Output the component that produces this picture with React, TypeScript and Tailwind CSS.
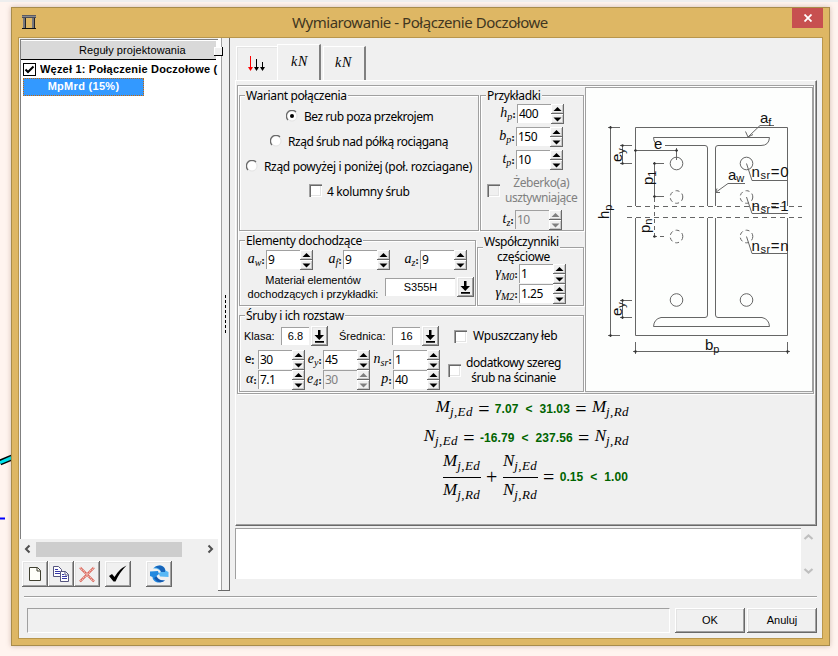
import React from "react";

const ui = "font-['Noto_Sans','Open_Sans',sans-serif] text-[12px] tracking-[-0.36px] leading-[14px] whitespace-nowrap";
const arial = "font-['Liberation_Sans',Arial,sans-serif] whitespace-nowrap";
const math = "font-['Liberation_Serif','Times_New_Roman',serif] italic whitespace-nowrap";
const raised =
  "bg-[#f0f0f0] shadow-[inset_-1px_-1px_0_#696969,inset_1px_1px_0_#fff,inset_-2px_-2px_0_#a0a0a0,inset_2px_2px_0_#e3e3e3]";

function Group({ title, className, titleClass, children }: { title: string; className: string; titleClass?: string; children: React.ReactNode }) {
  return (
    <div className={`relative shrink-0 border border-[#a0a0a0] shadow-[inset_1px_1px_0_#fff,1px_1px_0_#fff] ${className}`}>
      <span className={`absolute bg-[#f0f0f0] px-px ${ui} ${titleClass ?? "left-[5px] -top-[7px]"}`}>{title}</span>
      {children}
    </div>
  );
}

function Spin({ base, sub, value, labelClass, disabled, upright }: { base: string; sub?: string; value: string; labelClass: string; disabled?: boolean; upright?: boolean }) {
  const arrow = disabled ? "#808080" : "#000";
  return (
    <div className="flex h-[20px] shrink-0">
      <span className={`flex justify-end items-center pr-px leading-[16px] ${upright ? ui : `text-[14px] ${math}`} ${labelClass}`}>
        <span className="relative -top-px">{base}</span>
        {sub && <span className="relative top-[3px] text-[10px]">{sub}</span>}
        <span className="not-italic font-bold text-[11px]">:</span>
      </span>
      <div
        className={`w-[34px] h-[19px] pl-px pt-[2px] border-l border-t border-[#a0a0a0] ${ui} tracking-[-0.5px]! ${disabled ? "bg-[#f0f0f0] text-[#808080]" : "bg-white text-black"}`}
      >
        {value}
      </div>
      <div className="flex flex-col w-[13px]">
        {["M2.500 7h8L6.500 3z", "M2.500 3.500h8L6.500 7.500z"].map((d) => (
          <div key={d} className="w-[13px] h-[10px] bg-[#f0f0f0] shadow-[inset_-1px_-1px_0_#696969,inset_1px_1px_0_#fff,inset_-2px_-2px_0_#c8c8c8]">
            <svg width="13" height="10" className="block">
              <path d={d} fill={arrow} />
            </svg>
          </div>
        ))}
      </div>
    </div>
  );
}

function Check({ disabled }: { disabled?: boolean }) {
  return (
    <div
      className={`w-[13px] h-[13px] shrink-0 shadow-[inset_1px_1px_0_#a0a0a0,inset_2px_2px_0_#696969,inset_-1px_-1px_0_#fff,inset_-2px_-2px_0_#e3e3e3] ${disabled ? "bg-[#f0f0f0]" : "bg-white"}`}
    />
  );
}

function Radio({ on }: { on?: boolean }) {
  return (
    <svg width="12" height="12" viewBox="0 0 12 12" className="shrink-0">
      <circle cx="6" cy="6" r="5" fill="#fff" stroke="#e3e3e3" />
      <path d="M2 10A5.300 5.300 0 0 1 10 2" fill="none" stroke="#696969" strokeWidth="1.300" />
      {on && <circle cx="6" cy="6" r="2" fill="#000" />}
    </svg>
  );
}

function Combo({ value, className }: { value: string; className: string }) {
  return (
    <div className="flex items-center gap-[2px]">
      <div className={`h-[18px] flex items-center justify-center bg-white border-l border-t border-[#a0a0a0] text-[11px] ${arial} ${className}`}>{value}</div>
      <div className={`w-[17px] h-[20px] ${raised}`}>
        <svg width="17" height="20" className="block">
          <path d="M7 4h2.500v5H13L8.250 14 3.500 9H7zM4 15h9v1.800H4z" fill="#000" />
        </svg>
      </div>
    </div>
  );
}

function Sym({ base, sub }: { base: string; sub: string }) {
  return (
    <span className={`relative -top-[2px] inline-flex items-baseline text-[17px] leading-[20px] ${math}`}>
      {base}
      <span className="relative top-[4px] text-[13px] tracking-[0.4px]">{sub}</span>
    </span>
  );
}

const Op = ({ children }: { children: string }) => (
  <span className="font-['Liberation_Serif',serif] text-[20px] leading-[20px] w-[12px] text-center">{children}</span>
);
const Num = ({ children }: { children: string }) => (
  <span className={`text-[#006400] font-bold text-[12px] tracking-[0.1px] whitespace-pre ${arial}`}>{children}</span>
);

function Frac({ base, className }: { base: string; className: string }) {
  return (
    <div className={`flex flex-col items-center ${className}`}>
      <div className="h-[24px] flex items-start"><Sym base={base} sub="j,Ed" /></div>
      <div className="w-full h-px bg-black" />
      <div className="h-[24px] pt-[4px] flex items-start"><Sym base={base} sub="j,Rd" /></div>
    </div>
  );
}

function Diagram() {
  return (
    <svg width="226" height="303" viewBox="586 88 226 303" className="block" fill="none" stroke="#666" strokeWidth="1">
      <path d="M635.500 206V127.500H787.500V206M635.500 218V335.500H787.500V218" />
      <path d="M627 206.500H802M627 217.500H802" strokeDasharray="5 4" />
      <path d="M707.500 206V148Q707.500 145.500 705 145.500H665M656 144Q653.500 141 653.500 137.500H769.500Q769 145.500 761 145.500H718Q715.500 145.500 715.500 148V206" />
      <path d="M707.500 218V315Q707.500 317.500 705 317.500H661Q654 319 653.500 326.500H769.500Q769 319 762 317.500H718Q715.500 317.500 715.500 315V218" />
      {[676.5, 746.5].map((x) => (
        <g key={x}>
          <circle cx={x} cy="163.500" r="6.300" />
          <circle cx={x} cy="300" r="6.300" />
          <circle cx={x} cy="197" r="6.300" strokeDasharray="4 3" />
          <circle cx={x} cy="236.500" r="6.300" strokeDasharray="4 3" />
        </g>
      ))}
      <path d="M610.500 126V337M608 127.500H620M608 335.500H620M622.500 145V164M620 145.500H632M620 163.500H632M634 150.500H678M676.500 148V160M654.500 162V198M653 163.500H664M653 196.500H664M622.500 299V319M620 300.500H632M620 317.500H632M633 351.500H790M635.500 342V354M787.500 342V354" />
      <path d="M654.500 198V237M653 236.500H664" strokeDasharray="4 3" />
      <path d="M774 125.500H760L748 137M745.500 131.500L748 137L753 134.500M745 183.500H728L715.500 192.500M717 188.500L715.500 192.500H720M746.500 163.500L752 180.500H788M746.500 197L752 213.500H788M746.500 236.500L752 253.500H788" />
      <g fill="#333" stroke="none">
        {[[610.5, 127.5], [610.5, 335.5], [622.5, 145.5], [622.5, 163.5], [635.5, 150.5], [676.5, 150.5], [654.5, 163.5], [654.5, 196.5], [654.5, 236.5], [622.5, 300.5], [622.5, 317.5], [635.5, 351.5], [787.5, 351.5]].map(([x, y]) => (
          <circle key={`${x}-${y}`} cx={x} cy={y} r="1.200" />
        ))}
      </g>
      <g fill="#111" stroke="none" fontFamily="Liberation Sans" fontSize="15">
        <text x="654" y="149">e</text>
        <text x="760" y="123">a<tspan dy="3" fontSize="11">f</tspan></text>
        <text x="728" y="180">a<tspan dy="2" fontSize="11">w</tspan></text>
        <text x="751.500" y="177" textLength="37">n<tspan dy="2" fontSize="11">sr</tspan><tspan dy="-2">=0</tspan></text>
        <text x="751.500" y="211" textLength="37">n<tspan dy="2" fontSize="11">sr</tspan><tspan dy="-2">=1</tspan></text>
        <text x="751.500" y="251" textLength="37">n<tspan dy="2" fontSize="11">sr</tspan><tspan dy="-2">=n</tspan></text>
        <text x="705" y="350">b<tspan dy="3" fontSize="11">p</tspan></text>
        <text transform="translate(609 219) rotate(-90)">h<tspan dy="3" fontSize="11">p</tspan></text>
        <text transform="translate(622 162) rotate(-90)">e<tspan dy="3" fontSize="11">y</tspan></text>
        <text transform="translate(622 316) rotate(-90)">e<tspan dy="3" fontSize="11">y</tspan></text>
        <text transform="translate(653 185) rotate(-90)">p<tspan dy="3" fontSize="11">1</tspan></text>
        <text transform="translate(649.500 233) rotate(-90)">p<tspan dy="2" fontSize="11">n</tspan></text>
      </g>
    </svg>
  );
}

function LeftPanel() {
  return (
    <div className="flex flex-col w-[199px] shrink-0 bg-[#f0f0f0]">
      <div className="h-[500px] mt-px ml-px border-l border-t border-[#808080] bg-white flex flex-col">
        <div className="relative mt-px mr-[2px] h-[19px] bg-[#d9d9d9] border-b border-black">
          <div className={`text-[11px] leading-[16px] pl-[58px] pt-px tracking-[0.08px] ${arial}`}>Reguły projektowania</div>
          <div className="absolute left-[193px] top-[6px] z-10 w-[9px] h-[9px] bg-[#f0f0f0] border-r border-b border-black shadow-[inset_1px_1px_0_#fff]" />
        </div>
        <div className="flex items-center pl-[2px] h-[17px] mt-px overflow-hidden">
          <svg width="13" height="13" viewBox="0 0 13 13" className="shrink-0">
            <rect x=".5" y=".5" width="12" height="12" fill="#fff" stroke="#000" />
            <path d="M2.500 6.500L5 9L10.500 3.500" fill="none" stroke="#000" strokeWidth="2" />
          </svg>
          <span className={`ml-[4px] w-[178px] overflow-hidden font-bold text-[11px] leading-[15px] tracking-[0.2px] ${arial}`}>Węzeł 1: Połączenie Doczołowe (</span>
        </div>
        <div className={`ml-[2px] w-[121px] h-[18px] bg-[#3399ff] border border-dotted border-[#cc6600] text-white font-bold text-[11px] leading-[15px] text-center tracking-[0.3px] ${arial}`}>MpMrd (15%)</div>
      </div>
      <div className="h-[19px] pl-[4px] pt-px flex items-center">
        <svg width="10" height="10" viewBox="0 0 10 10"><path d="M6.500 1.500L3 5L6.500 8.500" fill="none" stroke="#505050" strokeWidth="2" /></svg>
        <div className="ml-[3px] w-[146px] h-[15px] bg-[#cdcdcd]" />
        <svg width="10" height="10" viewBox="0 0 10 10" className="ml-[23px]"><path d="M3.500 1.500L7 5L3.500 8.500" fill="none" stroke="#505050" strokeWidth="2" /></svg>
      </div>
      <div className="flex pl-[3px] pt-[3px]">
        <div className={`w-[26px] h-[26px] ${raised}`}>
          <svg width="26" height="26"><path d="M7.500 6.500h8l3 3v10h-11z" fill="#fffffa" stroke="#404030" /><path d="M15 6.500v3.500h3.500" fill="none" stroke="#404030" /></svg>
        </div>
        <div className={`w-[26px] h-[26px] ${raised}`}>
          <svg width="26" height="26" stroke="#55557f">
            <path d="M5.500 5.500h5l3 3v7h-8z" fill="#fff" /><path d="M7 8.500h3M7 10.500h5M7 12.500h5" stroke="#3838a8" />
            <path d="M12.500 10.500h5l3 3v7h-8z" fill="#fff" /><path d="M17 10.500V14h3.500" fill="none" /><path d="M14 13.500h2M14 15.500h5M14 17.500h5" stroke="#3838a8" />
          </svg>
        </div>
        <div className={`w-[26px] h-[26px] ${raised}`}>
          <svg width="26" height="26"><path d="M6 6.500L20 20.500M20 6.500L6 20.500" stroke="#d85c50" strokeWidth="2.400" /><path d="M6 6.500L20 20.500M20 6.500L6 20.500" stroke="#fbe4de" strokeWidth="1.200" strokeDasharray="1 1" /></svg>
        </div>
        <div className={`ml-[5px] w-[26px] h-[26px] ${raised}`}>
          <svg width="26" height="26"><path d="M4 15L7 13L9.500 16Q14 8 21.500 4.500Q14 12 10.500 20.500H8.500Z" fill="#000" /></svg>
        </div>
        <div className={`ml-[15px] w-[26px] h-[26px] ${raised}`}>
          <svg width="26" height="26">
            <path d="M7 7.500Q10 4 15 4.500Q19 6 19.500 9.500L22.500 11V16L14 15.500L12.500 12L15 11Q13 7 7 7.500Z" fill="#58b8f5" />
            <path d="M8 6.500Q13 3 17 5.500Q20 8 19 11L15 11Q14 6.500 8 6.500Z" fill="#1664ba" />
            <path d="M4 10.500L12 10L13 13L10.500 15Q12 20 19 19.500Q15 22.500 10 21Q6.500 19 6.500 16L4 15Z" fill="#2489df" />
            <path d="M8 17L10.500 15.500Q13 20 19 19.500Q13 24 8 17Z" fill="#1458ad" />
          </svg>
        </div>
      </div>
    </div>
  );
}

function Settings() {
  return (
    <div className="flex ml-px mt-[4px] w-[577px] h-[309px] border border-[#a0a0a0] shadow-[inset_1px_1px_0_#fff,1px_1px_0_#fff]">
      <div className="w-[347px] shrink-0 pl-px pt-[9px]">
        <div className="flex gap-px h-[145px]">
          <Group title="Wariant połączenia" className="w-[240px] h-[136px] pt-[7px]">
            <div className={`flex items-center h-[25px] pl-[46px] gap-[6px] ${ui}`}><Radio on /><span className="pt-[2px] tracking-[-0.48px]">Bez rub poza przekrojem</span></div>
            <div className={`flex items-center h-[25px] pl-[30px] gap-[6px] ${ui}`}><Radio /><span className="pt-[2px] tracking-[-0.46px]">Rząd śrub nad półką rociąganą</span></div>
            <div className={`flex items-center h-[25px] pl-[6px] gap-[6px] ${ui}`}><Radio /><span className="pt-[2px] tracking-[-0.34px]">Rząd powyżej i poniżej (poł. rozciagane)</span></div>
            <div className={`flex items-center h-[25px] pl-[69px] gap-[5px] ${ui}`}><Check /><span className="pt-[2px]">4 kolumny śrub</span></div>
          </Group>
          <Group title="Przykładki" className="w-[104px] h-[136px] pt-[8px]">
            <div className="flex flex-col gap-[3px]">
              <Spin base="h" sub="p" value="400" labelClass="w-[36px]" />
              <Spin base="b" sub="p" value="150" labelClass="w-[35px]" />
              <Spin base="t" sub="p" value="10" labelClass="w-[35px]" />
            </div>
            <div className="flex items-center pl-[6px] pt-[5px] gap-[5px] text-[#808080]">
              <Check disabled />
              <div className={`text-center leading-[15px]! tracking-[-0.45px]! ${ui}`}>Żeberko(a)<br />usztywniające</div>
            </div>
            <div className="pt-[5px]"><Spin base="t" sub="z" value="10" labelClass="w-[34px]" disabled /></div>
          </Group>
        </div>
        <div className="flex gap-px h-[75px]">
          <Group title="Elementy dochodzące" className="w-[237px] h-[66px] pt-[9px]">
            <div className="flex">
              <Spin base="a" sub="w" value="9" labelClass="w-[26px]" />
              <Spin base="a" sub="f" value="9" labelClass="w-[30px]" />
              <Spin base="a" sub="z" value="9" labelClass="w-[30px]" />
            </div>
            <div className="flex pl-[7px] pt-[3px]">
              <div className={`w-[132px] text-center text-[11px] leading-[14px] ${arial}`}>Materiał elementów<br />dochodzących i przykładki:</div>
              <div className="pl-[6px] pt-[4px]"><Combo value="S355H" className="w-[70px]" /></div>
            </div>
          </Group>
          <Group title="Współczynniki" titleClass="left-[5px] -top-[13px]" className="mt-[7px] w-[107px] h-[59px]">
            <div className={`text-center pr-[14px] pt-[2px] ${ui}`}>częściowe</div>
            <div>
              <Spin base="γ" sub="M0" value="1" labelClass="w-[41px]" />
              <Spin base="γ" sub="M2" value="1.25" labelClass="w-[41px]" />
            </div>
          </Group>
        </div>
        <Group title="Śruby i ich rozstaw" className="w-[345px] h-[77px] pt-[10px]">
          <div className={`flex items-center h-[20px] text-[11px] ${arial}`}>
            <span className="w-[41px] pl-[4px]">Klasa:</span>
            <Combo value="6.8" className="w-[28px]" />
            <span className="w-[64px] pl-[11px]">Średnica:</span>
            <Combo value="16" className="w-[28px]" />
            <div className="pl-[15px]"><Check /></div>
            <span className={`pl-[6px] ${ui}`}>Wpuszczany łeb</span>
          </div>
          <div className="flex pt-[4px]">
            <div>
              <div className="flex">
                <Spin base="e" value="30" labelClass="w-[18px] pr-[4px]!" upright />
                <Spin base="e" sub="y" value="45" labelClass="w-[18px]" />
                <Spin base="n" sub="sr" value="1" labelClass="w-[23px]" />
              </div>
              <div className="flex">
                <Spin base="α" value="7.1" labelClass="w-[18px]" />
                <Spin base="e" sub="4" value="30" labelClass="w-[18px]" disabled />
                <Spin base="p" value="40" labelClass="w-[23px]" />
              </div>
            </div>
            <div className="flex items-center pl-[8px] gap-[5px]">
              <Check />
              <div className={`text-center leading-[15px]! tracking-[-0.45px]! ${ui}`}>dodatkowy szereg<br />śrub na ścinanie</div>
            </div>
          </div>
        </Group>
      </div>
      <div className="w-[228px] h-[305px] mt-px border border-[#a0a0a0] bg-[#fdfefd]"><Diagram /></div>
    </div>
  );
}

function Results() {
  return (
    <div className="flex flex-col pt-[2px]">
      <div className="flex items-center justify-end pr-[187px] h-[26px] gap-[5px]">
        <Sym base="M" sub="j,Ed" /><Op>=</Op><Num>{"7.07  <  31.03"}</Num><Op>=</Op><Sym base="M" sub="j,Rd" />
      </div>
      <div className="flex items-center justify-end pr-[187px] h-[32px] gap-[5px]">
        <Sym base="N" sub="j,Ed" /><Op>=</Op><Num>{"-16.79  <  237.56"}</Num><Op>=</Op><Sym base="N" sub="j,Rd" />
      </div>
      <div className="flex items-center justify-end pr-[188px] h-[46px] gap-[5px]">
        <Frac base="M" className="w-[38px]" /><Op>+</Op><Frac base="N" className="w-[35px]" /><Op>=</Op><Num>{"0.15  <  1.00"}</Num>
      </div>
    </div>
  );
}

export default function App() {
  return (
    <div className="w-[838px] h-[656px] overflow-hidden relative bg-[#fff4ef] border-t-2 border-[#eeeeee] pt-[5px] pl-[11px] text-black">
      <svg width="12" height="72" className="absolute left-0 top-[450px]">
        <path d="M0 10.500L12 5.500" stroke="#000" strokeWidth="6" /><path d="M0 10.500L12 5.500" stroke="#00e5ee" strokeWidth="3" /><path d="M0 66.500h5" stroke="#00f" strokeWidth="2" />
      </svg>
      <div className="relative w-[819px] h-[639px] bg-[#deb764] border border-[#a88c4b] shadow-[0_0_5px_rgba(120,80,60,0.35)] flex flex-col">
        <div className="flex h-[29px] shrink-0">
          <svg width="14" height="14" viewBox="0 0 14 14" className="ml-[10px] mt-[7px] shrink-0">
            <path d="M0 0h14v3H0z" fill="#4c4c55" /><path d="M1 3h3v10H1zM10 3h3v10h-3z" fill="#77777c" /><path d="M3 3h1v10H3zM12 3h1v10h-1z" fill="#26262a" /><path d="M0 13h14v1H0z" fill="#111" /><path d="M0 1.300h14" stroke="#999" />
          </svg>
          <div className="flex-1 pl-[254px] pt-[4px] font-['Noto_Sans','Open_Sans',sans-serif] text-[15px] leading-[20px] tracking-[-0.46px] text-[#41361f]"><span className="inline-block ml-[2px] whitespace-nowrap">Wymiarowanie - Połączenie Doczołowe</span></div>
          <div className="w-[31px] h-[20px] mr-[6px] bg-[#c75050] flex items-center justify-center shrink-0">
            <svg width="8" height="8" viewBox="0 0 8 8"><path d="M.5 .5L7.500 7.500M7.500 .5L.5 7.500" stroke="#fff" strokeWidth="1.800" /></svg>
          </div>
        </div>
        <div className="ml-[6px] w-[805px] h-[602px] border border-[#b8964c] bg-[#f0f0f0] flex flex-col">
          <div className="flex h-[553px] shrink-0">
            <LeftPanel />
            <div className="relative w-[12px] shrink-0 bg-[#f0f0f0] border-r border-b border-[#696969] shadow-[inset_3px_0_0_#fff,inset_4px_0_0_#a0a0a0]">
              <div className="absolute left-[7px] top-[257px] h-[38px] border-l border-dashed border-black" />
            </div>
            <div className="flex flex-col w-[587px] shrink-0 pl-[5px] pt-[6px]">
              <div className="flex items-end h-[36px] pl-px relative">
                <div className="w-[41px] h-[34px] border-l border-t border-white shadow-[inset_1px_1px_0_#e3e3e3] pl-[9px] pt-[8px]">
                  <svg width="22" height="18"><path d="M4.500 1v13" stroke="#f00" /><path d="M2 12h5l-2.500 4z" fill="#f00" /><path d="M10.500 4v10M16.500 7v7" stroke="#000" /><path d="M8 12h5l-2.500 4zM14 12h5l-2.500 4z" fill="#000" /></svg>
                </div>
                <div className={`w-[44px] h-[36px] border-l border-t border-l-white border-t-white border-r-2 border-r-[#808080] pl-[13px] pt-[8px] text-[14px] leading-[18px] tracking-[0.8px] ${math}`}>kN</div>
                <div className={`ml-[2px] w-[43px] h-[34px] border-l border-t border-l-white border-t-white border-r-2 border-r-[#808080] pl-[11px] pt-[7px] text-[14px] leading-[18px] tracking-[0.8px] ${math}`}>kN</div>
              </div>
              <div className="w-[582px] h-[446px] border-l border-t border-l-white border-t-white border-r border-b border-r-[#696969] border-b-[#696969] shadow-[inset_-1px_-1px_0_#a0a0a0]">
                <Settings />
                <Results />
              </div>
              <div className="mt-[2px] flex h-[52px]">
                <div className="w-[566px] h-[51px] bg-white border-l border-t border-[#a0a0a0]" />
                <svg width="16" height="51"><path d="M3.500 11L7.500 7.500L11.500 11M3.500 41L7.500 44.500L11.500 41" fill="none" stroke="#bfbfbf" strokeWidth="2.200" /></svg>
              </div>
            </div>
          </div>
          <div className="ml-[5px] mt-[5px] w-[793px] h-[2px] border-t border-t-[#a0a0a0] bg-white" />
          <div className="flex pt-[10px] pl-[8px]">
            <div className="w-[643px] h-[25px] border border-l-[#a0a0a0] border-t-[#a0a0a0] border-r-white border-b-white" />
            <div className={`ml-[5px] w-[70px] h-[25px] text-[11px] leading-[25px] text-center ${raised} ${arial}`}>OK</div>
            <div className={`ml-[2px] w-[70px] h-[25px] text-[11px] leading-[25px] text-center ${raised} ${arial}`}>Anuluj</div>
          </div>
        </div>
      </div>
    </div>
  );
}
